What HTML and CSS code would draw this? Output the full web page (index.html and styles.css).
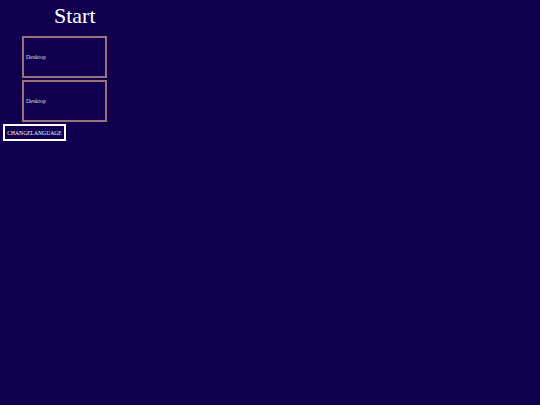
FILE: index.html
```html
<!DOCTYPE html>
<html lang="en">
<head>
    <meta charset="UTF-8">
    <title>Start</title>
    <link rel="stylesheet" href="styles.css">
</head>
<body>
    <h1 class="title">Start</h1>

    <!-- Tiles -->
    <div class="tiles">
        <div class="tile">Desktop</div>
        <div class="tile">Desktop</div>
    </div>

    <button class="lang-button">CHANGELANGUAGE</button>
</body>
</html>
```

FILE: styles.css
```css
body {
    background-color: #10004f;
    color: #fff;
    font-family: 'Liberation Serif', serif;
    margin: 0;
    padding: 0 3px;
}
.title {
    margin: 0;
    padding: 3px 0 0 51px;
    font-size: 22px;
    font-weight: normal;
    line-height: 26px;
}
.tiles {
    display: flex;
    flex-direction: column;
    gap: 2px;
    margin: 7px 0 2px 19px;
}
.tile {
    width: 85px;
    height: 42px;
    border: 2px solid #98727a;
    display: flex;
    align-items: center;
    padding-left: 2px;
    box-sizing: border-box;
    font-size: 6px;
    color: #ddd;
}
.lang-button {
    display: block;
    background-color: transparent;
    color: #fff;
    border: 2px solid #fff;
    font-family: 'Liberation Serif', serif;
    font-size: 5.6px;
    padding: 0 2px;
    width: 63px;
    height: 17px;
    white-space: nowrap;
}
```
